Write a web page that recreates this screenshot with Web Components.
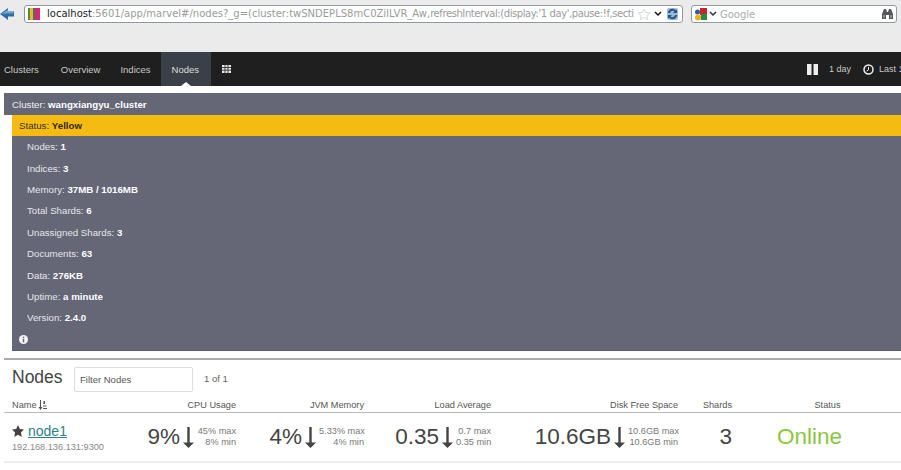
<!DOCTYPE html>
<html><head><meta charset="utf-8">
<style>
html,body{margin:0;padding:0;background:#fff;overflow:hidden}
body{width:901px;height:470px;font-family:"Liberation Sans",Arial,sans-serif;color:#444}
</style></head><body>
<browser-bar></browser-bar>
<marvel-nav></marvel-nav>
<cluster-panel name="wangxiangyu_cluster" status="Yellow">
  <stat-row label="Nodes" value="1"></stat-row>
  <stat-row label="Indices" value="3"></stat-row>
  <stat-row label="Memory" value="37MB / 1016MB"></stat-row>
  <stat-row label="Total Shards" value="6"></stat-row>
  <stat-row label="Unassigned Shards" value="3"></stat-row>
  <stat-row label="Documents" value="63"></stat-row>
  <stat-row label="Data" value="276KB"></stat-row>
  <stat-row label="Uptime" value="a minute"></stat-row>
  <stat-row label="Version" value="2.4.0"></stat-row>
</cluster-panel>
<nodes-section></nodes-section>
<script>
function def(name,html){
  customElements.define(name,class extends HTMLElement{
    connectedCallback(){
      if(this.shadowRoot)return;
      const r=this.attachShadow({mode:'open'});
      r.innerHTML=typeof html==='function'?html(this):html;
    }
  });
}
def('browser-bar',`<style>
:host{display:block;height:52px;background:#ebebeb;box-sizing:border-box;font-family:"DejaVu Sans",sans-serif}
.wrap{display:flex;align-items:flex-start;padding:5px 4px 0 0}
.back{width:15px;height:18px;margin-right:9px;display:block;flex:none}
.url{width:659px;height:18px;box-sizing:border-box;border:1px solid #8d9aa5;border-radius:3px;background:#fff;display:flex;align-items:center;padding:0 3px;flex:none}
.fav{width:12px;height:12px;display:flex;flex:none;margin-right:7px}
.fav i{flex:1}
.txt{flex:1;white-space:nowrap;overflow:hidden;font-size:10px;color:#9a9a9a;line-height:16px}
.txt b{font-weight:400;color:#222}
.txt span{letter-spacing:-.42px}
.i{flex:none;display:block}
.search{margin-left:8px;width:206px;height:18px;box-sizing:border-box;border:1px solid #8d9aa5;border-radius:3px;background:#fff;display:flex;align-items:center;padding:0 2px;flex:none;font-size:10px;color:#aaa}
.search span{flex:1;margin-left:3px}
</style><div class="wrap">
<svg class="back" viewBox="0 0 15 18"><path d="M0 9l8-6v3.500h6v5H8V15z" fill="#2b6ea8"/><path d="M1.500 9L8 4.500V7h5v1.500H6z" fill="#6fa6d4"/></svg>
<div class="url"><div class="fav"><i style="background:#5a8a3a"></i><i style="background:#e8b830"></i><i style="background:#3c7a5a"></i><i style="background:#d8247a"></i><i style="background:#d8247a"></i></div>
<div class="txt"><b>localhost</b>:5601/app/marvel#/nodes?_g=(cluster:twSNDEPLS8mC0ZiILVR_Aw,<span>refreshInterval:(display:'1 day',pause:!f,secti</span></div>
<svg class="i" width="14" height="12" viewBox="0 0 14 12" style="margin:0 3px 0 2px"><path d="M7 1l1.800 3.500 4 .5-3 2.700.8 3.800L7 9.600 3.400 11.500l.8-3.800-3-2.700 4-.5z" fill="none" stroke="#d5d5d5"/></svg>
<svg class="i" width="8" height="6" viewBox="0 0 8 6" style="margin-right:4px"><path d="M1 1l3 3 3-3" fill="none" stroke="#111" stroke-width="1.500"/></svg>
<svg class="i" width="13" height="14" viewBox="0 0 13 14"><rect x="1" y="1" width="11" height="12" rx="2" fill="#9dbcd8"/><path d="M2 6a4.500 4.500 0 0 1 8-2.500L11 2v4H7l1.500-1.500A2.800 2.800 0 0 0 4 6zM11 8a4.500 4.500 0 0 1-8 2.500L2 12V8h4l-1.500 1.500A2.800 2.800 0 0 0 9 8z" fill="#23568c"/></svg>
</div>
<div class="search">
<svg class="i" width="14" height="14" viewBox="0 0 14 14"><rect x="6" y="1" width="7" height="7" fill="#c8242c"/><rect x="7" y="7" width="6" height="6" fill="#2c8a3c"/><circle cx="3.500" cy="5" r="2.500" fill="#2c5aa8"/><circle cx="4" cy="10.500" r="3" fill="#e8b020"/></svg>
<svg class="i" width="8" height="6" viewBox="0 0 8 6" style="margin-left:1px"><path d="M1 1l3 3 3-3" fill="none" stroke="#333" stroke-width="1.500"/></svg>
<span>Google</span>
<svg class="i" width="13" height="12" viewBox="0 0 13 12"><path d="M1 11V6l2-5h2l1 3h1l1-3h2l2 5v5H8V7H5v4z" fill="#55585a"/><path d="M2.500 7h1v3h-1zM9.500 7h1v3h-1z" fill="#bbb"/></svg>
</div></div>`);
def('marvel-nav',`<style>
:host{display:flex;height:34px;background:#1f1f1f;color:#c8c8c8;font-size:9.500px;align-items:stretch;position:relative;overflow:hidden}
a{display:flex;align-items:center;padding:0 11px;white-space:nowrap}
a.on{background:#3b4048;color:#ddd;position:relative;padding-right:12px}
a.on::after{content:"";position:absolute;left:50%;margin-left:-5px;bottom:0;border:5px solid transparent;border-top:0;border-bottom:4px solid #fff}
.sp{flex:1}
.r{display:flex;align-items:center;white-space:nowrap;width:94px;flex:none;font-size:9px}
svg{display:block;flex:none}
</style>
<a style="padding-left:4px">Clusters</a><a style="padding-right:9px">Overview</a><a style="padding-right:10px">Indices</a><a class="on">Nodes</a>
<a><svg width="9" height="8" viewBox="0 0 9 8"><path d="M0 0h9v8H0z" fill="#e8e8e8"/><path d="M0 2.500h9M0 5.200h9M3 0v8M6 0v8" stroke="#1f1f1f" stroke-width=".8"/></svg></a>
<div class="sp"></div>
<div class="r"><svg width="11" height="11" viewBox="0 0 11 11"><path d="M0 0h4.500v11H0zM6.500 0H11v11H6.500z" fill="#eee"/></svg><span style="margin:0 12px 0 11px">1 day</span><svg width="11" height="11" viewBox="0 0 11 11"><circle cx="5.500" cy="5.500" r="4.500" fill="none" stroke="#eee" stroke-width="1.500"/><path d="M5.500 2.800v3L3.700 7" fill="none" stroke="#eee"/></svg><span style="margin-left:5px">Last 1</span></div>`);
def('cluster-panel',el=>`<style>
:host{display:block;margin-top:7px;margin-left:4px;color:#eee;font-size:9.700px}
.head{height:22px;background:#656777;display:flex;align-items:center;padding-left:8px}
.body{margin-left:8px;background:#656777;height:236px;display:flex;flex-direction:column;border-bottom:1px solid #5a5c6b;box-sizing:border-box}
.status{height:21px;flex:none;background:#f6bb12;color:#333;display:flex;align-items:center;padding:0 0 1px 7px;box-sizing:border-box}
b{font-weight:700;color:#fff}
.status b{color:#2f2a10}
.info{margin:0 0 0 7px;height:21px;display:flex;align-items:center}
</style>
<div class="head"><span>Cluster: <b>${el.getAttribute('name')}</b></span></div>
<div class="body"><div class="status"><span>Status: <b>${el.getAttribute('status')}</b></span></div>
<div><slot></slot></div>
<div class="info"><svg width="9" height="9" viewBox="0 0 9 9"><circle cx="4.500" cy="4.500" r="4.500" fill="#f4f4f4"/><rect x="3.800" y="3.800" width="1.400" height="3.500" fill="#656777"/><rect x="3.800" y="1.700" width="1.400" height="1.400" fill="#656777"/></svg></div>
</div>`);
def('stat-row',el=>`<style>
:host{display:flex;align-items:center;height:21.400px;padding-left:15px;white-space:nowrap;color:#e6e6ea}
b{color:#fff}
</style><span>${el.getAttribute('label')}: <b>${el.getAttribute('value')}</b></span>`);
def('metric-cell',el=>`<style>
:host{display:flex;align-items:center;justify-content:flex-end;color:#444}
.v{font-size:22.500px;line-height:28px;white-space:nowrap}
svg{display:block;flex:none;margin:0 3px 0 3px}
.s{font-size:9.200px;line-height:11px;text-align:right;white-space:nowrap;color:#777;width:${el.getAttribute('w')}px}
</style><span class="v">${el.getAttribute('value')}</span>
<svg width="11" height="21" viewBox="0 0 11 21"><path d="M4.300 0h2.400v15.500H11L5.500 21 0 15.500h4.300z" fill="#444"/></svg>
<div class="s">${el.getAttribute('max')} max<br>${el.getAttribute('min')} min</div>`);
def('nodes-section',`<style>
:host{display:block;margin:7px 0 0 4px;border-top:2px solid #aaa}
.bar{display:flex;align-items:center;padding:7px 0 0 8px;height:25px}
h2{margin:0 0 4px;font-weight:400;font-size:17.500px;color:#444;width:62px}
.in{width:119px;height:25px;box-sizing:border-box;border:1px solid #ddd;border-radius:2px;display:flex;align-items:center;padding-left:5px;font-size:9.500px;color:#555}
.ct{margin-left:11px;font-size:9.500px;color:#666;margin-bottom:2px}
.g{display:grid;grid-template-columns:100px 124px 128px 127px 187px 54px 165px;padding-left:8px}
.h{height:20px;border-bottom:1px solid #bbb;font-size:9.200px;color:#555;align-items:end;box-sizing:content-box}
.h div{text-align:right;white-space:nowrap;padding-bottom:2px}
.h div:first-child{text-align:left;display:flex;align-items:center;gap:1px}
.h .st{text-align:center;padding-left:26px}
.r{height:50px;border-bottom:2px solid #eee;box-sizing:border-box;align-items:center}
.n{display:flex;flex-direction:column}
.t{display:flex;align-items:center;font-size:14px;gap:4px}
.t a{color:#2f7f87;text-decoration:underline;text-underline-offset:1px}
.ip{font-size:9.200px;color:#888;margin-top:3px;white-space:nowrap}
.sh{font-size:22.500px;text-align:right;color:#444}
.on{font-size:22.500px;color:#8cc63f;padding-left:45px}
</style>
<div class="bar"><h2>Nodes</h2><div class="in">Filter Nodes</div><span class="ct">1 of 1</span></div>
<div class="g h"><div>Name <svg width="9" height="10" viewBox="0 0 9 10"><path d="M2 0h1v7h1.500L2.500 10 .5 7H2zM5.500 1h1.500v3H5.500zM5 5.500h3.500v1H5zM5 8h4v1H5z" fill="#555"/></svg></div><div>CPU Usage</div><div>JVM Memory</div><div>Load Average</div><div>Disk Free Space</div><div>Shards</div><div class="st">Status</div></div>
<div class="g r"><div class="n"><div class="t"><svg width="12" height="12" viewBox="0 0 11 11"><path d="M5.500 0l1.700 3.700 3.800.5-2.800 2.700.7 4L5.500 9 2.100 10.900l.7-4L0 4.200l3.800-.5z" fill="#444"/></svg><a>node1</a></div><div class="ip">192.168.136.131:9300</div></div>
<metric-cell value="9%" max="45%" min="8%" w="39"></metric-cell>
<metric-cell value="4%" max="5.33%" min="4%" w="45"></metric-cell>
<metric-cell value="0.35" max="0.7" min="0.35" w="35"></metric-cell>
<metric-cell value="10.6GB" max="10.6GB" min="10.6GB" w="50"></metric-cell>
<div class="sh">3</div><div class="on">Online</div></div>`);
</script></body></html>
